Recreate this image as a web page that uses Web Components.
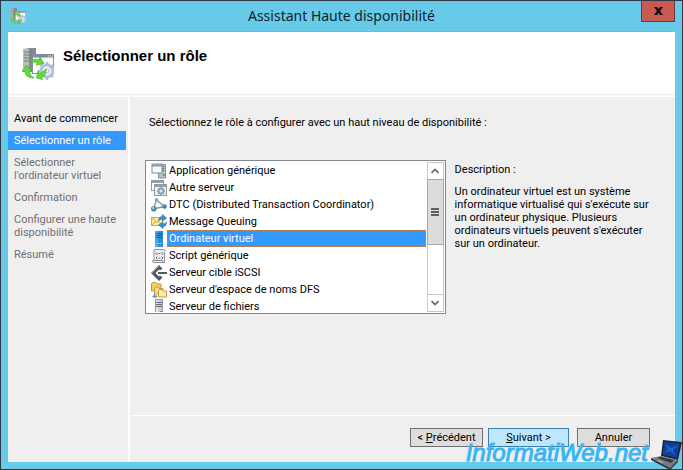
<!DOCTYPE html>
<html lang="fr">
<head>
<meta charset="utf-8">
<title>Assistant Haute disponibilité</title>
<style>
    body {
        margin: 0;
        font-family: Roboto, "Liberation Sans", Arial, sans-serif;
        font-size: 11px;
        line-height: 13px;
        color: #000;
    }
</style>
</head>
<body>

<wizard-window>
    <cluster-icon slot="icon" class="small"></cluster-icon>
    <span slot="title">Assistant Haute disponibilité</span>

    <wizard-header slot="header">
        <cluster-icon slot="icon"></cluster-icon>
        Sélectionner un rôle
    </wizard-header>

    <wizard-steps slot="steps">
        <wizard-step state="done">Avant de commencer</wizard-step>
        <wizard-step state="current">Sélectionner un rôle</wizard-step>
        <wizard-step>Sélectionner l'ordinateur virtuel</wizard-step>
        <wizard-step>Confirmation</wizard-step>
        <wizard-step>Configurer une haute disponibilité</wizard-step>
        <wizard-step>Résumé</wizard-step>
    </wizard-steps>

    <role-picker>
        <span slot="label">Sélectionnez le rôle à configurer avec un haut niveau de disponibilité :</span>
        <role-list slot="list">
            <role-item icon="app">Application générique</role-item>
            <role-item icon="other">Autre serveur</role-item>
            <role-item icon="dtc">DTC (Distributed Transaction Coordinator)</role-item>
            <role-item icon="message">Message Queuing</role-item>
            <role-item icon="vm" selected>Ordinateur virtuel</role-item>
            <role-item icon="script">Script générique</role-item>
            <role-item icon="iscsi">Serveur cible iSCSI</role-item>
            <role-item icon="dfs">Serveur d'espace de noms DFS</role-item>
            <role-item icon="files">Serveur de fichiers</role-item>
        </role-list>
        <span slot="heading">Description :</span>
        <span slot="description">Un ordinateur virtuel est un système informatique virtualisé qui s'exécute sur un ordinateur physique. Plusieurs ordinateurs virtuels peuvent s'exécuter sur un ordinateur.</span>
    </role-picker>

    <wizard-button slot="buttons">&lt; <u>P</u>récédent</wizard-button>
    <wizard-button slot="buttons" primary><u>S</u>uivant &gt;</wizard-button>
    <wizard-button slot="buttons" class="last">Annuler</wizard-button>
</wizard-window>

<site-watermark>InformatiWeb.net</site-watermark>

<script>
const ICONS = {
    app: `
        <path d="M7.500 1.500h7v13.500h-7z" fill="#b9c0c6" stroke="#858d95"/>
        <path d="M9 3.500h4M9 5.500h4M9 7.500h4" stroke="#5d666e"/>
        <rect x="1" y="1" width="10" height="9" fill="#f6f8f9" stroke="#858f98"/>
        <path d="M1 2.500h10" stroke="#8b99a6" stroke-width="2"/>
        <rect x="12" y="11" width="2" height="2" fill="#43c028"/>`,
    other: `
        <rect x=".5" y=".5" width="12" height="10" fill="#fff" stroke="#8f99a2"/>
        <path d="M1 2h11" stroke="#93a0ad" stroke-width="2"/>
        <rect x="3.500" y="4.500" width="12" height="11" fill="#edf2f6" stroke="#8f99a2"/>
        <path d="M4 6h11" stroke="#93a0ad" stroke-width="2"/>
        <circle cx="10" cy="11" r="2.500" fill="#dce7f0" stroke="#8aa4bb" stroke-width="2"/>
        <path d="M10 7v1.500M10 13.500V15M6 11h1.500M12.500 11H14M7.200 8.200l1 1M12 13l1 1M12.800 8.200l-1 1M8 13l-1 1" stroke="#8aa4bb" stroke-width="1.400"/>`,
    dtc: `
        <path d="M5.500 3L2.500 12L13.500 9.500Z" fill="#f4f9fc" stroke="#7e93a3" stroke-width="1.300"/>
        <circle cx="5.500" cy="3" r="1.900" fill="#8fa6b6"/>
        <circle cx="2.800" cy="11.700" r="2.800" fill="#4f86ad"/>
        <circle cx="2.200" cy="11" r="1.200" fill="#a9cbe0"/>
        <circle cx="13.500" cy="9.500" r="2.200" fill="#3975a0"/>
        <circle cx="13" cy="9" r=".8" fill="#a9cbe0"/>`,
    message: `
        <rect x=".5" y="3.500" width="11" height="8" fill="#fde9a0" stroke="#d7a83d"/>
        <path d="M1 4l5 4.500L11 4M1 11l4-4M11 11L7 7" fill="none" stroke="#dba93a"/>
        <path d="M7.500 6.500C8 3.500 9.500 2.500 11.500 2.500V.5L15.500 4L11.500 7V5C10 5 9 5.500 7.500 6.500Z" fill="#3f8fd0" stroke="#2369a8" stroke-width=".6"/>
        <path d="M15.500 8C15.500 11 14 12.500 12 12.500V14.500L7.500 11L12 8V10C13.500 10 14.500 9.500 15.500 8Z" fill="#3f8fd0" stroke="#2369a8" stroke-width=".6"/>`,
    vm: `
        <rect x="4" y="0" width="8" height="16" fill="#2e8fd8"/>
        <path d="M4 0h3v16H4z" fill="#4aa7e8"/>
        <path d="M5 2.500h6M5 4.500h6M5 6.500h6" stroke="#175f9f"/>
        <path d="M5 12.500h6" stroke="#7cc4f5"/>`,
    script: `
        <path d="M3.500 1.500h9.500c1 0 1.500 1 1 2l-.5 1v10H3c-1.500 0-2-1-1-2l1-1V3z" fill="#f2f3f4" stroke="#8a9095"/>
        <path d="M2 12.500h9.500c0 1 .5 2 2 2" fill="none" stroke="#8a9095"/>
        <path d="M6.500 4L5 5.500L6.500 7M10.500 4L12 5.500L10.500 7M7.500 5.500h2M6.500 8.500L5 10L6.500 11.500M10.500 8.500L12 10L10.500 11.500M7.500 10h2" fill="none" stroke="#626a70"/>`,
    iscsi: `
        <path d="M8 0L0 8L8 16L11.500 12.500L9 10.500L8 11.500L4.500 8L8 4.500L9 5.500L11.500 3.500Z" fill="#555b60"/>
        <path d="M7 8h9" stroke="#555b60" stroke-width="2"/>
        <path d="M8 1L1 8" stroke="#999fa3" stroke-width=".8"/>`,
    dfs: `
        <path d="M.5 9V1.500L2 .5h3l1 1.500h4V9z" fill="#f4cf68" stroke="#c79b36"/>
        <path d="M3.500 12V6l1-1h3l1 1.500H12V12z" fill="#f9df8f" stroke="#c79b36"/>
        <path d="M7.500 15V8.500l1-1h3l1 1.500h3v6z" fill="#fdebaa" stroke="#c79b36"/>
        <path d="M1.500 14.500L4 11.500v2h2v2H2z" fill="#5293cf"/>`,
    files: `
        <rect x="4.500" y=".5" width="7" height="15" fill="#c9ced2" stroke="#939ba2"/>
        <path d="M5 1h2v14H5z" fill="#e6e9eb"/>
        <path d="M5 3.500h6M5 5.500h6M5 7.500h6" stroke="#656e76"/>
        <rect x="9" y="12" width="2" height="2" fill="#4ab33a"/>`
};

class ClusterIcon extends HTMLElement {
    constructor() {
        super();
        this.attachShadow({mode: 'open'}).innerHTML = `
        <style>
            :host {
                display: block;
                width: 32px;
                height: 32px;
            }

            :host(.small) {
                width: 16px;
                height: 16px;
            }

            svg {
                display: block;
                width: 100%;
                height: 100%;
            }
        </style>
        <svg viewBox="0 0 32 32" aria-hidden="true">
            <path d="M1 1L8 0h6v24H1z" fill="#858b91"/>
            <path d="M1 1h6v23H1z" fill="#b9bec3"/>
            <path d="M2 4h11M2 7h11M2 10h11M2 13h11" stroke="#767d84"/>
            <rect x="10.500" y="6.500" width="21" height="19" fill="#f8fafb" stroke="#87919d"/>
            <path d="M10 8h22" stroke="#7f8c9d" stroke-width="3"/>
            <path d="M26 8h1M28 8h1M30 8h1" stroke="#e9eef5"/>
            <circle cx="25" cy="23" r="6" fill="#edf3fa" stroke="#b5c4d6" stroke-width="3"/>
            <path d="M25 14v4M25 28v4M16 23h4M30 23h2M18.500 16.500l3 3M28 26l3 3M31 17l-3 3" stroke="#b0bfd2" stroke-width="2.500"/>
            <circle cx="25" cy="23" r="2" fill="#fff" stroke="#a5b4c8"/>
            <path d="M8 15C10 11 13 10.500 17 12L18 9L22 15.500L14.500 17L15.500 14.500C12 13.500 10 14 8 15Z" fill="#5fdc38" stroke="#3db522" stroke-width=".7"/>
            <path d="M4.500 17L10 23L7.500 23C7.500 26 9 28 12 30C7 30 3 28 3 23.500H0Z" fill="#5fdc38" stroke="#3db522" stroke-width=".7"/>
            <path d="M24 21C24 26 22 29 19.500 29.500L20.500 31.500L14.500 30L16 23L17.500 25.500C20 25 21 23.500 24 21Z" fill="#5fdc38" stroke="#3db522" stroke-width=".7"/>
        </svg>
        `;
    }
}

class WizardWindow extends HTMLElement {
    constructor() {
        super();
        this.attachShadow({mode: 'open'}).innerHTML = `
        <style>
            :host {
                display: flex;
                flex-direction: column;
                box-sizing: border-box;
                min-height: 100vh;
                border: 1px solid #303943;
                background: #66cae8;
                padding: 0 7px 7px;
            }

            .titlebar {
                display: grid;
                grid-template-columns: 1fr auto 1fr;
                align-items: center;
                height: 30px;
            }

            .titlebar ::slotted([slot="icon"]) {
                margin-left: 2px;
            }

            h1 {
                margin: 0;
                font: 14px/20px "Noto Sans", "Open Sans", sans-serif;
                color: #10232c;
            }

            .close {
                align-self: start;
                justify-self: end;
                box-sizing: border-box;
                width: 34px;
                height: 21px;
                padding: 0;
                border: 1px solid #6b3b3c;
                border-top: 0;
                background: #c75b52;
            }

            .close svg {
                display: block;
                margin: 0 auto;
            }

            .client {
                flex: 1;
                display: flex;
                flex-direction: column;
                background: #efefef;
                border-top: 1px solid #82b4c4;
            }

            .body {
                flex: 1;
                display: grid;
                grid-template-columns: 120px minmax(0, 1fr);
            }

            .page {
                display: flex;
                flex-direction: column;
                border-left: 2px solid #fff;
            }

            main {
                flex: 1;
            }

            footer {
                display: flex;
                justify-content: flex-end;
                gap: 5px;
                border-top: 1px solid #fff;
                padding: 12px 25px 15px;
            }

            .buttons ::slotted(.last) {
                margin-left: 3px;
            }
        </style>
        <div class="titlebar">
            <slot name="icon"></slot>
            <h1><slot name="title"></slot></h1>
            <button class="close" type="button" aria-label="Fermer">
                <svg width="9" height="8" viewBox="0 0 9 8">
                    <path d="M0 0h3l1.500 2L6 0h3L6 4l3 4H6L4.500 6L3 8H0l3-4z" fill="#151010"/>
                </svg>
            </button>
        </div>
        <div class="client">
            <slot name="header"></slot>
            <div class="body">
                <slot name="steps"></slot>
                <div class="page">
                    <main><slot></slot></main>
                    <footer class="buttons"><slot name="buttons"></slot></footer>
                </div>
            </div>
        </div>
        `;
    }
}

class WizardHeader extends HTMLElement {
    constructor() {
        super();
        this.attachShadow({mode: 'open'}).innerHTML = `
        <style>
            :host {
                display: block;
                background: #fff;
                border-bottom: 2px solid #fff;
            }

            .banner {
                display: flex;
                align-items: flex-start;
                gap: 9px;
                height: 46px;
                padding: 16px 14px 0;
                border-bottom: 1px solid #eee;
            }

            h2 {
                margin: 0;
                font-family: "Liberation Sans", Arial, sans-serif;
                font-size: 15px;
                line-height: 16px;
                color: #000;
            }
        </style>
        <div class="banner">
            <slot name="icon"></slot>
            <h2><slot></slot></h2>
        </div>
        `;
    }
}

class WizardSteps extends HTMLElement {
    constructor() {
        super();
        this.attachShadow({mode: 'open'}).innerHTML = `
        <style>
            :host {
                display: block;
            }

            nav {
                display: flex;
                flex-direction: column;
                gap: 3px;
                padding: 12px 2px 0 0;
            }
        </style>
        <nav aria-label="Étapes"><slot></slot></nav>
        `;
    }
}

class WizardStep extends HTMLElement {
    constructor() {
        super();
        this.attachShadow({mode: 'open'}).innerHTML = `
        <style>
            :host {
                display: block;
                padding: 3px 4px 3px 6px;
                color: #707070;
            }

            :host([state="done"]) {
                color: #000;
            }

            :host([state="current"]) {
                background: #3399ff;
                color: #fff;
            }
        </style>
        <slot></slot>
        `;
    }
}

class RolePicker extends HTMLElement {
    constructor() {
        super();
        this.attachShadow({mode: 'open'}).innerHTML = `
        <style>
            :host {
                display: block;
                padding: 19px 20px 0 15px;
            }

            p {
                margin: 0;
            }

            .label {
                padding-left: 4px;
            }

            .columns {
                display: grid;
                grid-template-columns: 3fr 2fr;
                gap: 9px;
                margin-top: 31px;
            }

            .info {
                display: flex;
                flex-direction: column;
                gap: 9px;
                padding-top: 3px;
            }
        </style>
        <p class="label"><slot name="label"></slot></p>
        <div class="columns">
            <slot name="list"></slot>
            <div class="info">
                <p><slot name="heading"></slot></p>
                <p><slot name="description"></slot></p>
            </div>
        </div>
        `;
    }
}

class RoleList extends HTMLElement {
    constructor() {
        super();
        this.attachShadow({mode: 'open'}).innerHTML = `
        <style>
            :host {
                display: flex;
                box-sizing: border-box;
                height: 154px;
                padding: 1px;
                border: 1px solid #828790;
                background: #fff;
            }

            .items {
                flex: 1;
                overflow: hidden;
            }

            .scrollbar {
                display: flex;
                flex-direction: column;
                width: 17px;
                margin-left: 1px;
                box-sizing: border-box;
                border: 1px solid #c6c6c6;
            }

            button {
                height: 16px;
                padding: 0;
                border: 0;
                background: #fff;
            }

            svg {
                display: block;
                margin: 0 auto;
            }

            .track {
                flex: 1;
                border: solid #c6c6c6;
                border-width: 0 0 1px;
            }

            .thumb {
                display: flex;
                align-items: center;
                justify-content: center;
                box-sizing: border-box;
                height: 66px;
                margin: 0 -1px;
                border: 1px solid #a8a8a8;
                background: #dcdcdc;
            }
        </style>
        <div class="items" role="listbox" aria-label="Rôles"><slot></slot></div>
        <div class="scrollbar">
            <button type="button" aria-label="Défiler vers le haut">
                <svg width="8" height="6" viewBox="0 0 8 6"><path d="M.5 5L4 1.500L7.500 5" fill="none" stroke="#666" stroke-width="1.700"/></svg>
            </button>
            <div class="track">
                <div class="thumb">
                    <svg width="8" height="8" viewBox="0 0 8 8"><path d="M0 1h8M0 4h8M0 7h8" stroke="#606060" stroke-width="2"/></svg>
                </div>
            </div>
            <button type="button" aria-label="Défiler vers le bas">
                <svg width="8" height="6" viewBox="0 0 8 6"><path d="M.5 1L4 4.500L7.500 1" fill="none" stroke="#666" stroke-width="1.700"/></svg>
            </button>
        </div>
        `;
    }
}

class RoleItem extends HTMLElement {
    constructor() {
        super();
        this.attachShadow({mode: 'open'});
    }

    connectedCallback() {
        this.setAttribute('role', 'option');
        this.setAttribute('aria-selected', this.hasAttribute('selected'));
        this.shadowRoot.innerHTML = `
        <style>
            :host {
                display: flex;
                align-items: center;
                height: 17px;
                padding-left: 4px;
            }

            svg {
                flex: none;
                width: 16px;
                height: 16px;
            }

            .text {
                flex: 1;
                box-sizing: border-box;
                height: 17px;
                border: 1px solid transparent;
                padding: 1px;
                white-space: nowrap;
            }

            :host([selected]) .text {
                background: #3399ff padding-box;
                border: 1px solid #b08050;
                color: #fff;
            }
        </style>
        <svg viewBox="0 0 16 16" aria-hidden="true">${ICONS[this.getAttribute('icon')]}</svg>
        <span class="text"><slot></slot></span>
        `;
    }
}

class WizardButton extends HTMLElement {
    constructor() {
        super();
        this.attachShadow({mode: 'open'}).innerHTML = `
        <style>
            :host {
                display: block;
            }

            button {
                box-sizing: border-box;
                display: block;
                min-width: 73px;
                height: 19px;
                padding: 0 4px;
                border: 1px solid #707070;
                background: #dddddd;
                font: inherit;
                color: inherit;
            }

            :host([primary]) button {
                min-width: 81px;
                border-color: #3c7fb1;
                background: #bee6fd;
            }
        </style>
        <button type="button"><slot></slot></button>
        `;
    }
}

class SiteWatermark extends HTMLElement {
    constructor() {
        super();
        this.attachShadow({mode: 'open'}).innerHTML = `
        <style>
            :host {
                position: absolute;
                right: 0;
                bottom: 0;
                display: flex;
                align-items: flex-end;
                gap: 3px;
                font-family: "Liberation Sans", Arial, sans-serif;
                font-size: 24px;
                line-height: 34px;
                font-style: italic;
                color: #38b6f5;
                -webkit-text-stroke: 1px #38b6f5;
                pointer-events: none;
            }
        </style>
        <slot></slot>
        <svg width="32" height="30" viewBox="0 0 32 30" aria-hidden="true">
            <path d="M12 0L31 2L27 20L10 16Z" fill="#20252d"/>
            <path d="M13.500 1.500L29 3.500L25.500 18L11.500 14.500Z" fill="#0b3f9c"/>
            <path d="M14 4L20 8L28 5L22 10L25 16L19 11L13 13L17 9Z" fill="#2064c8"/>
            <path d="M10 16L27 20L19 28L0 18Z" fill="#777d85"/>
            <path d="M10 17L23 20L20 23L6 18Z" fill="#363b43"/>
            <path d="M8 20L13 22L11 23L6 21Z" fill="#a4a9b0"/>
            <path d="M0 18L19 28L27 20V22L19 30L0 20Z" fill="#30353c"/>
        </svg>
        `;
    }
}

customElements.define('cluster-icon', ClusterIcon);
customElements.define('wizard-window', WizardWindow);
customElements.define('wizard-header', WizardHeader);
customElements.define('wizard-steps', WizardSteps);
customElements.define('wizard-step', WizardStep);
customElements.define('role-picker', RolePicker);
customElements.define('role-list', RoleList);
customElements.define('role-item', RoleItem);
customElements.define('wizard-button', WizardButton);
customElements.define('site-watermark', SiteWatermark);
</script>
</body>
</html>
